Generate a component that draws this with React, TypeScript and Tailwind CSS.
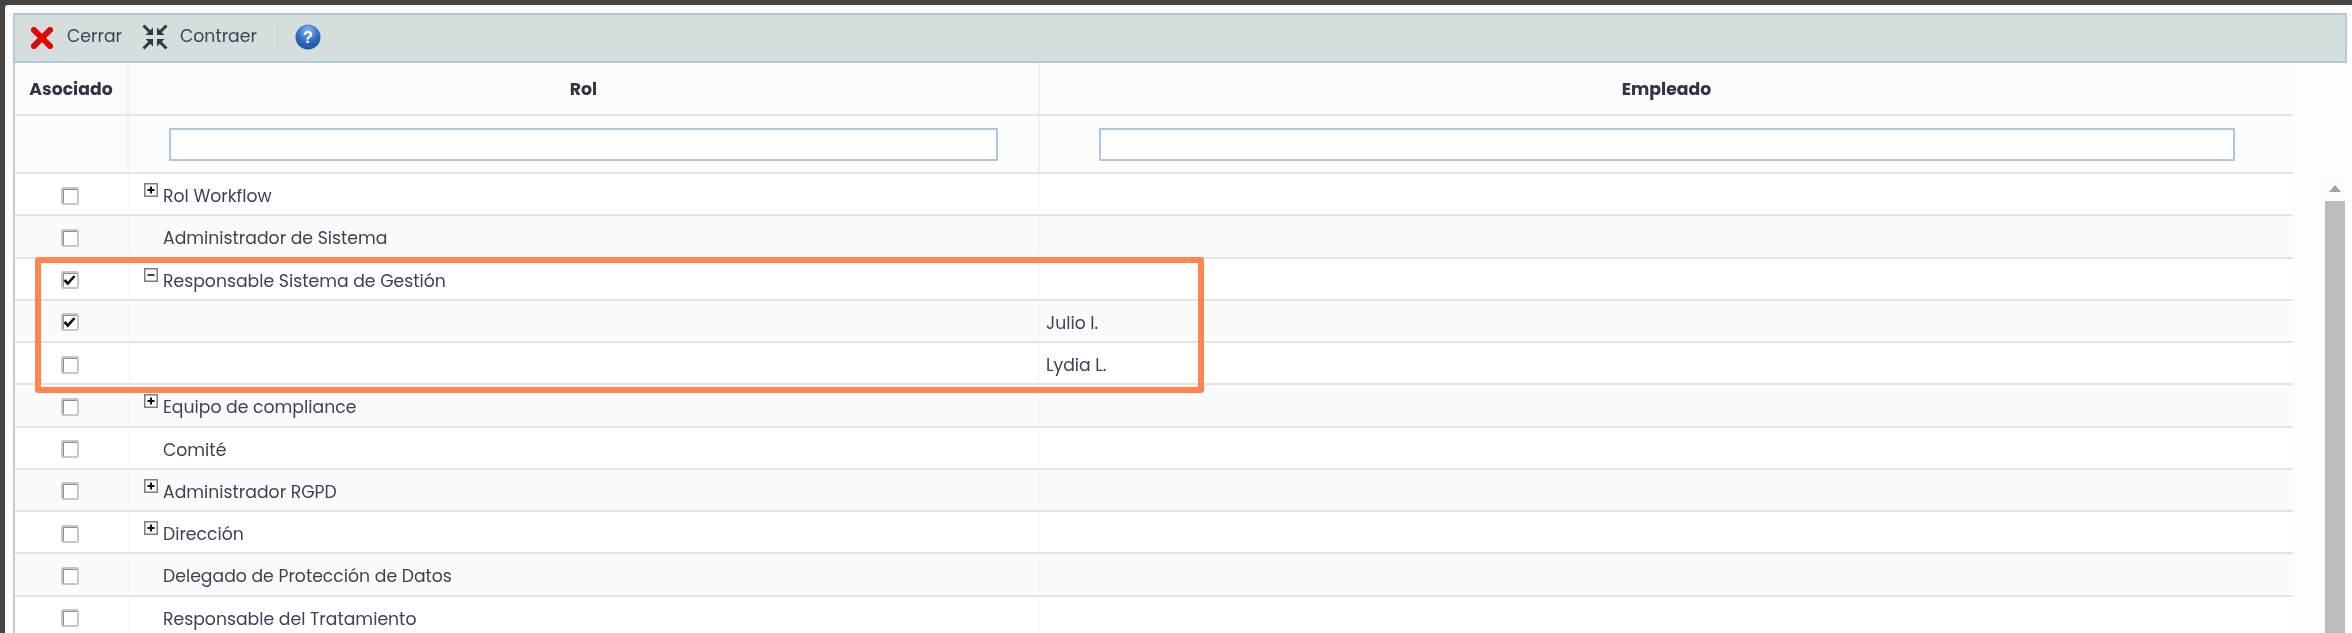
import React from "react";

const rows = [
  { rol: "Rol Workflow", icon: "plus", checked: false, emp: "" },
  { rol: "Administrador de Sistema", icon: "", checked: false, emp: "" },
  { rol: "Responsable Sistema de Gestión", icon: "minus", checked: true, emp: "" },
  { rol: "", icon: "", checked: true, emp: "Julio I." },
  { rol: "", icon: "", checked: false, emp: "Lydia L." },
  { rol: "Equipo de compliance", icon: "plus", checked: false, emp: "" },
  { rol: "Comité", icon: "", checked: false, emp: "" },
  { rol: "Administrador RGPD", icon: "plus", checked: false, emp: "" },
  { rol: "Dirección", icon: "plus", checked: false, emp: "" },
  { rol: "Delegado de Protección de Datos", icon: "", checked: false, emp: "" },
  { rol: "Responsable del Tratamiento", icon: "", checked: false, emp: "" },
];

function Expander({ kind }: { kind: string }) {
  return (
    <svg width="14" height="14" viewBox="0 0 14 14" className="mt-[9px] shrink-0">
      <rect x="0.75" y="0.75" width="12.5" height="12.5" fill="#fbfbfb" stroke="#7d7d7d" strokeWidth="1.5" />
      <rect x="3.5" y="6" width="7" height="2" fill={kind === "plus" ? "#111" : "#444"} />
      {kind === "plus" && <rect x="6" y="3.5" width="2" height="7" fill="#111" />}
    </svg>
  );
}

function Check({ checked }: { checked: boolean }) {
  return (
    <span className="w-[18px] h-[18px] bg-white border-2 border-[#c8c8c8] rounded-[2px] flex items-center justify-center shadow-[inset_1px_1px_0_#8f8f8f]">
      {checked && (
        <svg width="13" height="12" viewBox="0 0 13 12">
          <path d="M1.5 6 L4.8 9.5 L11.5 2" fill="none" stroke="#111" strokeWidth="2.6" />
        </svg>
      )}
    </span>
  );
}

export default function App() {
  return (
    <div className="relative w-[2352px] h-[633px] overflow-hidden bg-[#444444] font-['Poppins','Inter','Liberation_Sans',sans-serif] text-[#3d4257] blur-[0.45px]">
      <div className="mt-[5px] ml-[5px] h-[628px] bg-[#fdfdfd] rounded-tl-[3px] pt-[8px] pl-[8px] pr-[5px]">
        <div className="h-[620px] border-l-2 border-[#b9cfe2] flex flex-col">
          {/* toolbar */}
          <div className="h-[50px] -ml-[2px] bg-[#d5dddd] border-2 border-[#b0c8dd] flex items-center shrink-0 text-[17.25px] pb-[2px]">
            <svg width="22" height="22" viewBox="0 0 22 22" className="ml-[16px] mt-[2px] shrink-0">
              <path d="M3 3 L19 19 M19 3 L3 19" stroke="#df0606" strokeWidth="6" strokeLinecap="square" />
            </svg>
            <span className="ml-[14px] w-[55px] whitespace-nowrap">Cerrar</span>
            <svg width="26" height="26" viewBox="0 0 26 26" className="ml-[20px] shrink-0" fill="#2d3a45">
              <path d="M11 11 V3.5 L3.5 11 Z" />
              <path d="M1.5 1.5 L7.5 7.5" stroke="#2d3a45" strokeWidth="3" />
              <path d="M15 11 V3.5 L22.5 11 Z" />
              <path d="M24.5 1.5 L18.5 7.5" stroke="#2d3a45" strokeWidth="3" />
              <path d="M11 15 V22.5 L3.5 15 Z" />
              <path d="M1.5 24.5 L7.5 18.5" stroke="#2d3a45" strokeWidth="3" />
              <path d="M15 15 V22.5 L22.5 15 Z" />
              <path d="M24.5 24.5 L18.5 18.5" stroke="#2d3a45" strokeWidth="3" />
            </svg>
            <span className="ml-[12px] w-[78px] whitespace-nowrap">Contraer</span>
            <span className="ml-[19px] w-[1px] h-[30px] bg-[#c6d5e0]" />
            <svg width="26" height="26" viewBox="0 0 26 26" className="ml-[17px] shrink-0">
              <defs>
                <radialGradient id="h" cx="50%" cy="25%" r="80%">
                  <stop offset="0" stopColor="#8cb8ee" />
                  <stop offset="0.55" stopColor="#2f6cc4" />
                  <stop offset="1" stopColor="#1a4c9c" />
                </radialGradient>
              </defs>
              <circle cx="13" cy="13" r="12.5" fill="url(#h)" />
              <text x="13" y="19" textAnchor="middle" fontSize="17" fontWeight="700" fill="#fff" fontFamily="'Liberation Sans', sans-serif">?</text>
            </svg>
          </div>
          <div className="flex flex-1 min-h-0">
            <div className="w-[2278px] shrink-0 bg-[#fcfcfc]">
              {/* header */}
              <div className="h-[53px] flex items-stretch border-b-2 border-[#dfe6e6] font-bold text-[#2f3447] text-[17.25px] pt-[2px]">
                <div className="w-[114px] shrink-0 flex items-center justify-center border-r-2 border-[#eef1f1] -mt-[2px] pt-[2px]">Asociado</div>
                <div className="w-[911px] shrink-0 flex items-center justify-center border-r-2 border-[#eef1f1] -mt-[2px] pt-[2px]">Rol</div>
                <div className="flex-1 flex items-center justify-center">Empleado</div>
              </div>
              {/* filters */}
              <div className="h-[58px] flex items-center border-b-2 border-[#dfe6e6]">
                <div className="w-[114px] h-full shrink-0 border-r-2 border-[#eef1f1]" />
                <div className="w-[911px] h-full shrink-0 flex items-center pl-[40px] border-r-2 border-[#eef1f1] pt-[1px]">
                  <input className="w-[829px] h-[33px] bg-white border-2 border-[#afc8e2] outline-none" />
                </div>
                <div className="flex-1 h-full flex items-center pl-[59px] pt-[1px]">
                  <input className="w-[1136px] h-[33px] bg-white border-2 border-[#afc8e2] outline-none" />
                </div>
              </div>
              {/* rows */}
              {rows.map((r, i) => (
                <div
                  key={i}
                  className={`h-[42.25px] flex border-b-2 border-[#dfe6e6] text-[17.25px] ${i % 2 === 0 ? "bg-white" : "bg-[#fbfbfb]"}`}
                >
                  <div className="w-[114px] shrink-0 flex items-center justify-center border-r border-[#f5f6f6] pt-[3px] pr-[4px]">
                    <Check checked={r.checked} />
                  </div>
                  <div className="w-[911px] shrink-0 flex border-r border-[#f5f6f6] pl-[15px]">
                    <div className="w-[19px] shrink-0">{r.icon && <Expander kind={r.icon} />}</div>
                    <span className="leading-[44px] whitespace-nowrap">{r.rol}</span>
                  </div>
                  <div className="flex-1 pl-[6px] leading-[44px]">{r.emp}</div>
                </div>
              ))}
            </div>
            {/* scrollbar */}
            <div className="ml-[30px] w-[25px] bg-[#fcfcfc] mt-[111px] -mb-[2px] flex flex-col items-center">
              <div className="h-[27px] pt-[2px] flex items-center justify-center shrink-0">
                <svg width="12" height="7" viewBox="0 0 12 7"><path d="M6 0 L12 7 H0 Z" fill="#a3a3a3" /></svg>
              </div>
              <div className="w-[20px] flex-1 bg-[#bdbdbd]" />
            </div>
          </div>
        </div>
      </div>
      {/* highlight */}
      <div className="absolute left-[35px] top-[257px] w-[1169px] h-[136px] border-[6px] border-[#ff8550] rounded-[3px]" />
    </div>
  );
}
